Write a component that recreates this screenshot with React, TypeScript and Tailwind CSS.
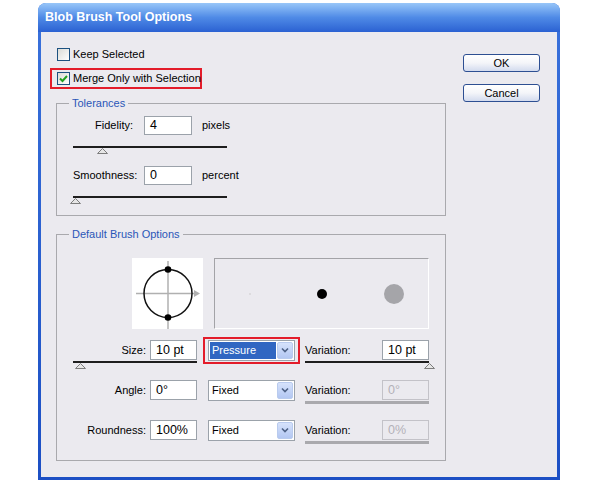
import React from "react";

function Checkbox({ checked }: { checked?: boolean }) {
  return (
    <span className="flex h-[13px] w-[13px] shrink-0 items-center justify-center border border-[#1c5180] bg-gradient-to-br from-[#dcdcd7] to-white">
      {checked && (
        <svg width="9" height="9" viewBox="0 0 9 9">
          <path d="M1 4.5 L3.5 7 L8 2" fill="none" stroke="#21a121" strokeWidth="2" />
        </svg>
      )}
    </span>
  );
}

function Field({ value, disabled }: { value: string; disabled?: boolean }) {
  return (
    <div
      className={
        disabled
          ? "flex h-[20px] w-[47px] shrink-0 items-center border border-[#c3c2c8] bg-[#ebeaef] pl-[5px] text-[12.5px] text-[#b3b1b8]"
          : "flex h-[20px] w-[47px] shrink-0 items-center border border-[#9ba2aa] bg-white pl-[5px] text-[12.5px] text-black"
      }
    >
      {value}
    </div>
  );
}

function Thumb() {
  return (
    <svg width="11" height="6" viewBox="0 0 11 6" className="block">
      <polygon points="5.5,0.5 10.5,5.5 0.5,5.5" fill="#e6e6e6" stroke="#7d7d7d" />
    </svg>
  );
}

function Select({ value, selected, marked }: { value: string; selected?: boolean; marked?: boolean }) {
  return (
    <div
      className={
        marked
          ? "-mx-[5px] -my-[3px] shrink-0 border-2 border-[#e31c2a] px-[3px] py-[1px]"
          : "-mx-[5px] -my-[3px] shrink-0 border-2 border-transparent px-[3px] py-[1px]"
      }
    >
      <div className="flex h-[21px] w-[87px] items-center border border-[#9ba2aa] bg-white p-[1px]">
        <div
          className={
            selected
              ? "flex h-full flex-1 items-center bg-[#3066c2] pl-[2px] text-[11px] text-white"
              : "flex h-full flex-1 items-center pl-[2px] text-[11px] text-black"
          }
        >
          {value}
        </div>
        <div className="ml-[1px] flex h-full w-[16px] items-center justify-center rounded-[2px] border border-[#b9cbee] bg-gradient-to-b from-[#d6e2fb] to-[#b3c7f2]">
          <svg width="8" height="6" viewBox="0 0 8 6">
            <path d="M1 1.5 L4 4.5 L7 1.5" fill="none" stroke="#4d6185" strokeWidth="1.6" />
          </svg>
        </div>
      </div>
    </div>
  );
}

function BrushRow({
  label,
  value,
  mode,
  variation,
  active,
  selected,
  marked,
}: {
  label: string;
  value: string;
  mode: string;
  variation: string;
  active?: boolean;
  selected?: boolean;
  marked?: boolean;
}) {
  return (
    <div className="flex flex-col">
      <div className="flex h-[20px] items-center pl-[16px]">
        <div className="w-[73px] text-right text-[11px]">{label}</div>
        <div className="ml-[4px]">
          <Field value={value} />
        </div>
        <div className="ml-[11px]">
          <Select value={mode} selected={selected} marked={marked} />
        </div>
        <div className="ml-[10px] w-[77px] text-[11px]">Variation:</div>
        <Field value={variation} disabled={!active} />
      </div>
      <div className="flex h-[20px] pl-[16px]">
        <div className="w-[124px]">
          {active && (
            <>
              <div className="mt-[1px] h-[2px] w-full bg-[#1e1e1e]" />
              <div className="ml-[2px]">
                <Thumb />
              </div>
            </>
          )}
        </div>
        <div className="ml-[108px] w-[124px]">
          {active ? (
            <>
              <div className="mt-[1px] h-[2px] w-full bg-[#1e1e1e]" />
              <div className="ml-[119px]">
                <Thumb />
              </div>
            </>
          ) : (
            <div className="mt-[1px] h-[3px] w-full bg-[#a9a9ad]" />
          )}
        </div>
      </div>
    </div>
  );
}

export default function App() {
  return (
    <div className="min-h-screen bg-white pl-[38px] pt-[3px] font-['Liberation_Sans',Arial,sans-serif] text-black">
      <div className="flex h-[477px] w-[522px] flex-col overflow-hidden rounded-t-[8px] bg-gradient-to-b from-[#3a72dc] to-[#1c4fc4]">
        <div className="flex h-[29px] shrink-0 items-center bg-gradient-to-b from-[#98c6f8] via-[#4f8ae6] to-[#2b61d2] pl-[7px] text-[12.5px] font-bold text-white">
          Blob Brush Tool Options
        </div>
        <div className="mx-[3px] mb-[3px] flex flex-1 bg-[#ebeaef] pl-[9px]">
          {/* left column */}
          <div className="flex w-[396px] flex-col pt-[14px]">
            <div className="flex h-[16px] items-center gap-[3px] whitespace-nowrap pl-[7px] text-[11px]">
              <Checkbox />
              <span>Keep Selected</span>
            </div>
            <div className="mt-[6px] flex h-[21px] w-[152px] items-center gap-[3px] whitespace-nowrap border-2 border-[#e31c2a] pl-[5px] text-[11px]">
              <Checkbox checked />
              <span>Merge Only with Selection</span>
            </div>

            <fieldset className="ml-[6px] mt-[7px] h-[120px] w-[390px] border border-[#a9a9ad]">
              <legend className="ml-[12px] px-[3px] text-[11px] leading-[14px] text-[#2a56b8]">Tolerances</legend>
              <div className="mt-[6px] flex h-[19px] items-center pl-[16px] text-[11px]">
                <div className="w-[60px] text-right">Fidelity:</div>
                <div className="ml-[11px] flex h-[19px] w-[48px] items-center border border-[#9ba2aa] bg-white pl-[5px] text-[12.5px]">
                  4
                </div>
                <div className="ml-[10px]">pixels</div>
              </div>
              <div className="ml-[16px] mt-[11px] h-[2px] w-[154px] bg-[#1e1e1e]" />
              <div className="ml-[40px]">
                <Thumb />
              </div>
              <div className="mt-[12px] flex h-[19px] items-center pl-[16px] text-[11px]">
                <div className="w-[60px] text-right">Smoothness:</div>
                <div className="ml-[11px] flex h-[19px] w-[48px] items-center border border-[#9ba2aa] bg-white pl-[5px] text-[12.5px]">
                  0
                </div>
                <div className="ml-[10px]">percent</div>
              </div>
              <div className="ml-[16px] mt-[11px] h-[2px] w-[154px] bg-[#1e1e1e]" />
              <div className="ml-[13px]">
                <Thumb />
              </div>
            </fieldset>

            <fieldset className="ml-[6px] mt-[11px] h-[234px] w-[390px] border border-[#a9a9ad]">
              <legend className="ml-[12px] px-[3px] text-[11px] leading-[14px] text-[#2a56b8]">
                Default Brush Options
              </legend>
              <div className="ml-[75px] mt-[17px] flex">
                <div className="h-[71px] w-[71px] bg-white">
                  <svg width="71" height="71" viewBox="0 0 71 71">
                    <line x1="4" y1="35.5" x2="64" y2="35.5" stroke="#b0b0b0" strokeWidth="1.5" />
                    <line x1="36" y1="3" x2="36" y2="71" stroke="#b0b0b0" strokeWidth="1.5" />
                    <polygon points="62,32 68,35.5 62,39" fill="#b0b0b0" />
                    <circle cx="36" cy="35.5" r="24" fill="none" stroke="#111" strokeWidth="1.5" />
                    <circle cx="36" cy="11.5" r="3.3" fill="#000" />
                    <circle cx="36" cy="59.5" r="3.3" fill="#000" />
                  </svg>
                </div>
                <div className="ml-[11px] h-[71px] w-[215px] border border-b-white border-l-[#a3a3a7] border-r-white border-t-[#a3a3a7]">
                  <svg width="213" height="69" viewBox="0 0 213 69">
                    <circle cx="35" cy="35" r="0.8" fill="#c8c8c8" />
                    <circle cx="107" cy="35" r="5" fill="#000" />
                    <circle cx="179" cy="35" r="10" fill="#a5a5a9" />
                  </svg>
                </div>
              </div>
              <div className="mt-[11px] flex flex-col">
                <BrushRow label="Size:" value="10 pt" mode="Pressure" variation="10 pt" active selected marked />
                <BrushRow label="Angle:" value="0°" mode="Fixed" variation="0°" />
                <BrushRow label="Roundness:" value="100%" mode="Fixed" variation="0%" />
              </div>
            </fieldset>
          </div>

          {/* right column */}
          <div className="ml-[17px] flex flex-col gap-[12px] pt-[22px]">
            <button className="flex h-[18px] w-[77px] items-center justify-center rounded-[3px] border border-[#2d4f92] bg-gradient-to-b from-white via-[#f4f5f9] to-[#d3dbee] text-[11px]">
              OK
            </button>
            <button className="flex h-[18px] w-[77px] items-center justify-center rounded-[3px] border border-[#2d4f92] bg-gradient-to-b from-white via-[#f4f5f9] to-[#d3dbee] text-[11px]">
              Cancel
            </button>
          </div>
        </div>
      </div>
    </div>
  );
}
